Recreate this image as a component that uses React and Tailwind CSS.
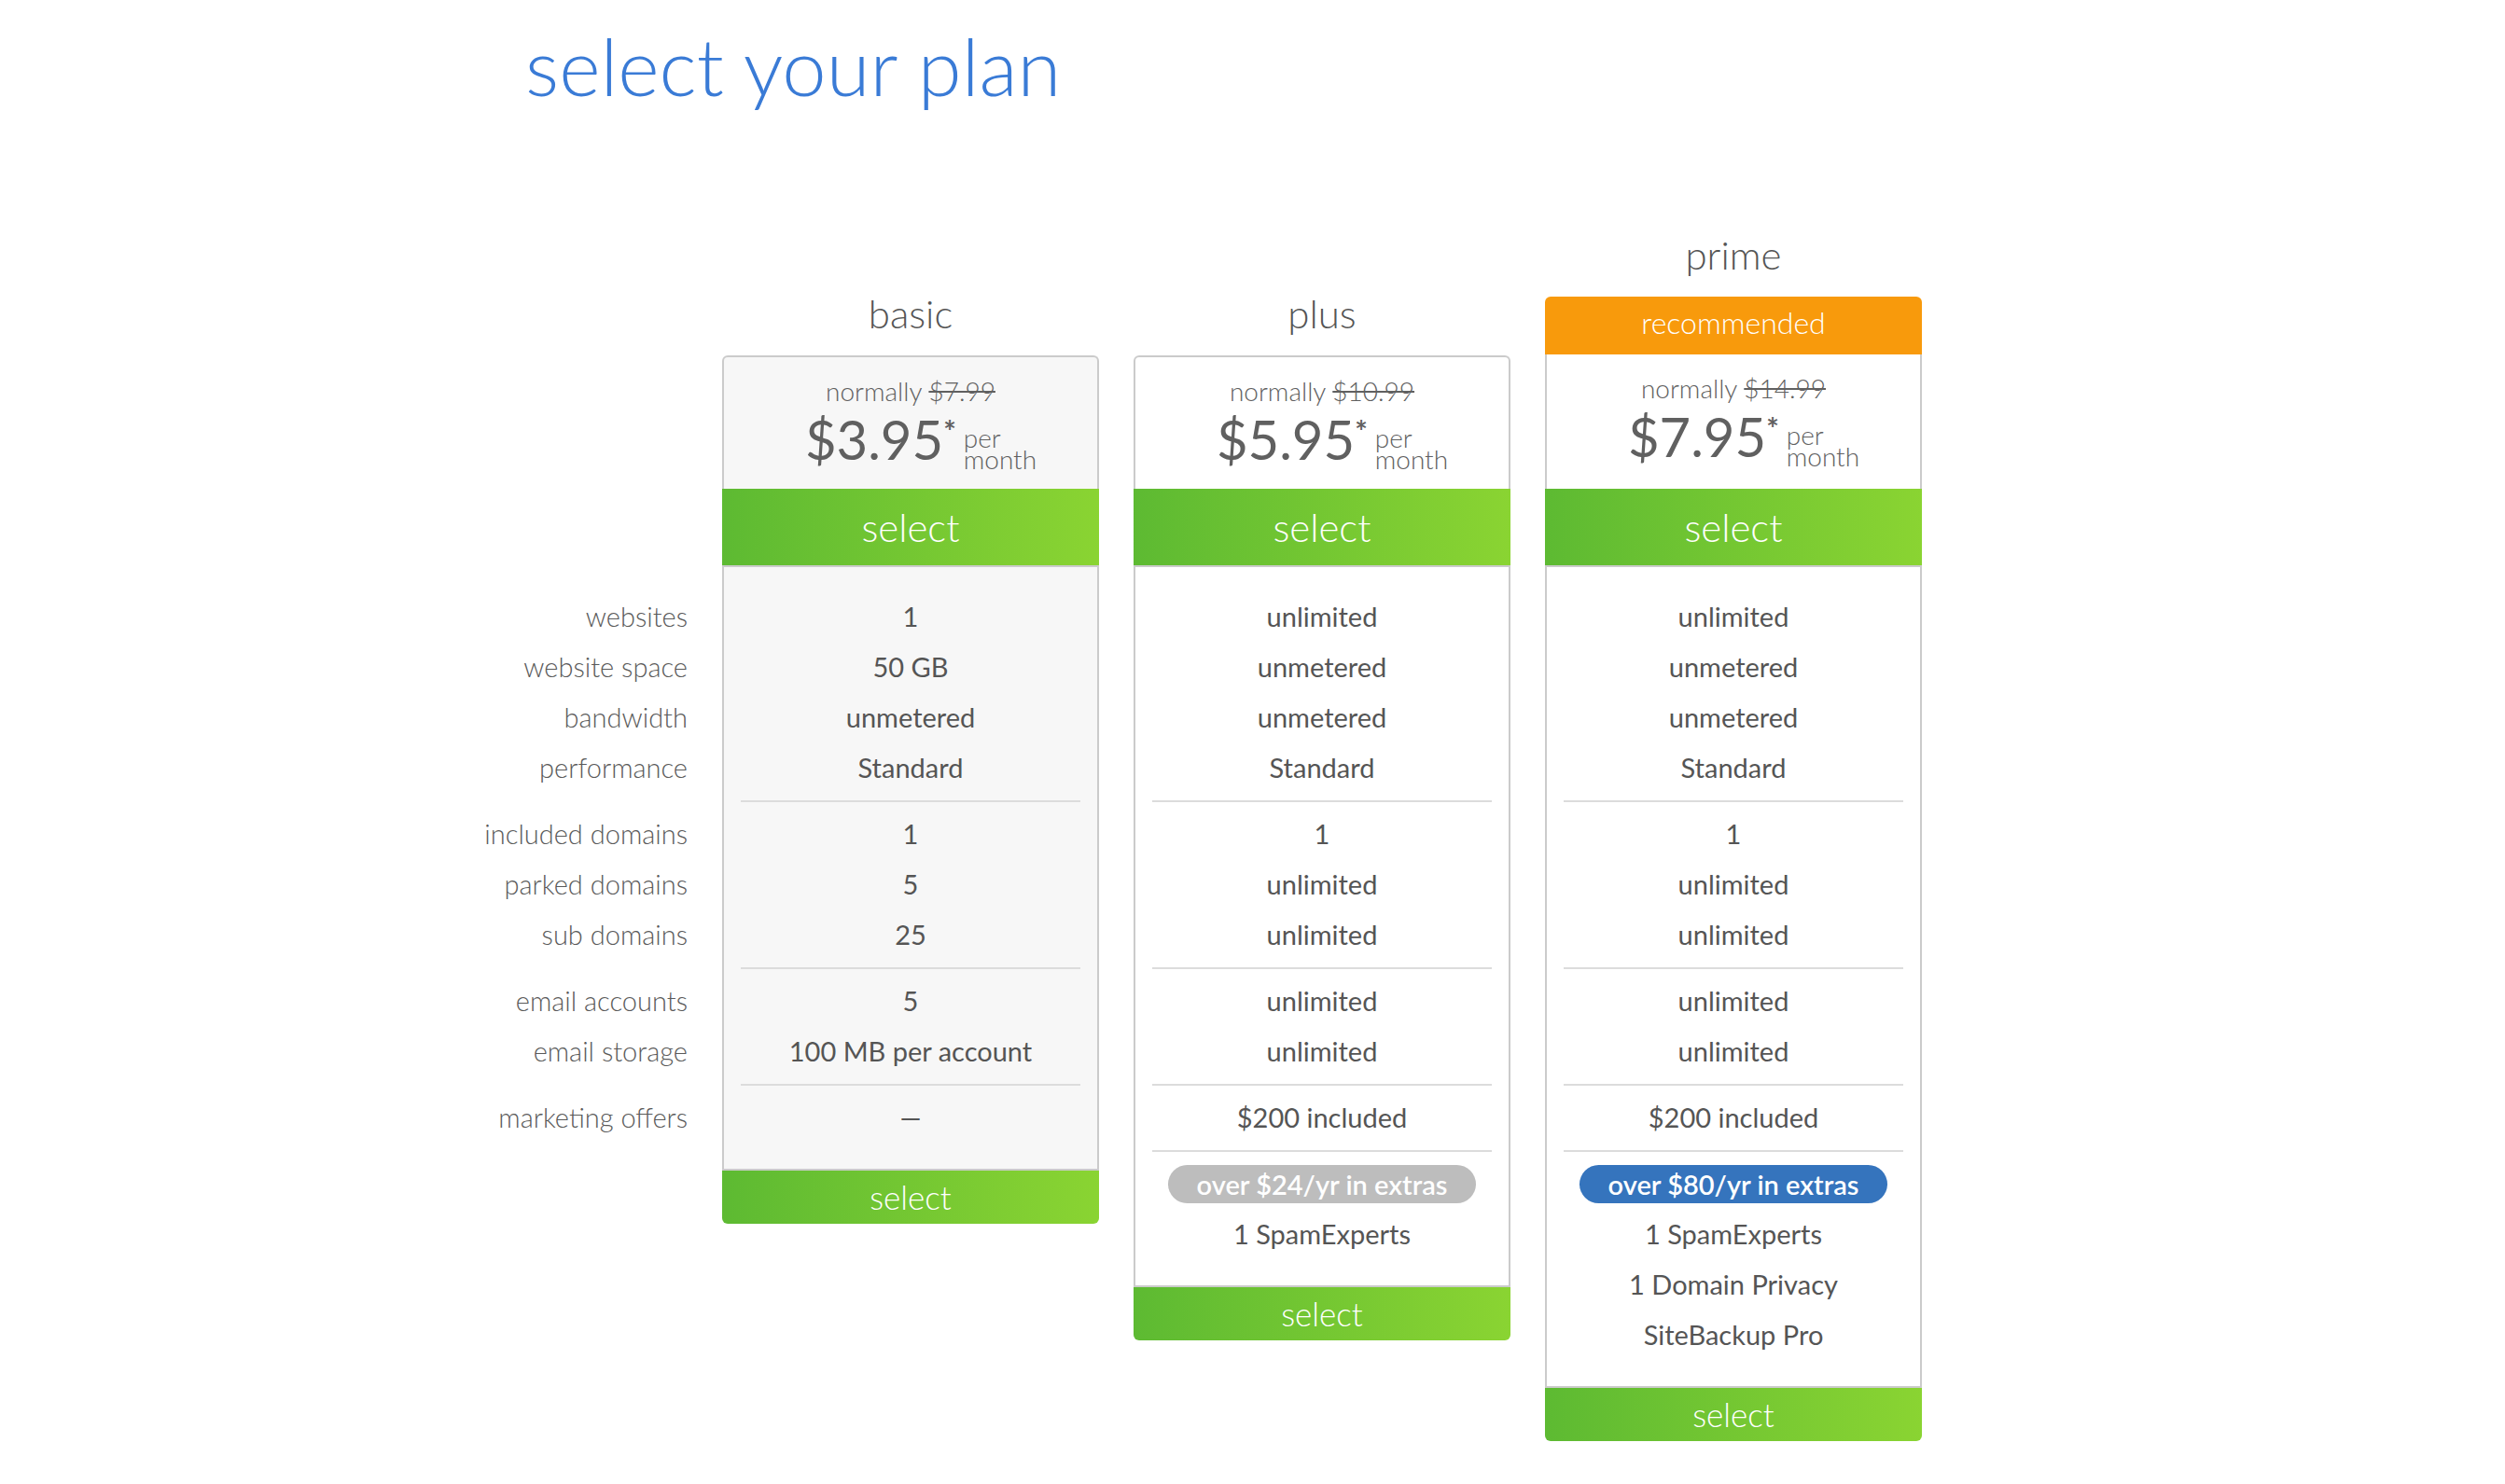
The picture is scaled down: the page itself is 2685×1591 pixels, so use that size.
import React from "react";

// feature labels, grouped the same way the plan rows are grouped
const labelGroups = [
  ["websites", "website space", "bandwidth", "performance"],
  ["included domains", "parked domains", "sub domains"],
  ["email accounts", "email storage"],
  ["marketing offers"],
];

const plans = [
  {
    name: "basic",
    normally: "$7.99",
    price: "$3.95",
    shaded: true,
    groups: [
      ["1", "50 GB", "unmetered", "Standard"],
      ["1", "5", "25"],
      ["5", "100 MB per account"],
      ["—"],
    ],
  },
  {
    name: "plus",
    normally: "$10.99",
    price: "$5.95",
    groups: [
      ["unlimited", "unmetered", "unmetered", "Standard"],
      ["1", "unlimited", "unlimited"],
      ["unlimited", "unlimited"],
      ["$200 included"],
    ],
    extras: { label: "over $24/yr in extras", tone: "bg-[#bdbdbd]", items: ["1 SpamExperts"] },
  },
  {
    name: "prime",
    normally: "$14.99",
    price: "$7.95",
    recommended: true,
    groups: [
      ["unlimited", "unmetered", "unmetered", "Standard"],
      ["1", "unlimited", "unlimited"],
      ["unlimited", "unlimited"],
      ["$200 included"],
    ],
    extras: {
      label: "over $80/yr in extras",
      tone: "bg-[#3574bd]",
      items: ["1 SpamExperts", "1 Domain Privacy", "SiteBackup Pro"],
    },
  },
];

function Divider({ hidden }) {
  return <div className={`mx-[18px] mt-[8px] mb-[7px] h-[2px] ${hidden ? "" : "bg-[#dcdcdc]"}`} />;
}

function SelectBar({ big, bottom }) {
  return (
    <button
      className={`w-full text-center font-light text-white bg-linear-to-r from-[#5dba32] to-[#8ad432] ${
        big ? "h-[82px] text-[42px] leading-[82px]" : "h-[57px] text-[35px] leading-[57px]"
      } ${bottom ? "rounded-b-[6px]" : ""}`}
    >
      select
    </button>
  );
}

function PlanCard({ plan }) {
  const bg = plan.shaded ? "bg-[#f7f7f7]" : "bg-white";
  return (
    <div className={`w-[404px] flex flex-col ${plan.recommended ? "" : "mt-[63px]"}`}>
      <div className="h-[60px] mb-[15px] text-center text-[42px] leading-[60px] font-light text-[#555]">
        {plan.name}
      </div>

      {plan.recommended && (
        <div className="h-[62px] rounded-t-[6px] bg-[#f89a0c] pt-[12px] text-center text-[32px] leading-none font-light text-white">
          recommended
        </div>
      )}

      {/* price header */}
      <div
        className={`${bg} border-[#cbcbcb] pt-[19px] text-[#606060] ${
          plan.recommended ? "h-[144px] border-x-2" : "h-[143px] border-x-2 border-t-2 rounded-t-[6px]"
        }`}
      >
        <div className="text-center text-[28px] leading-[34px] font-light">
          normally <span className="line-through">{plan.normally}</span>
        </div>
        <div className="mt-[6px] flex items-end justify-center pl-[22px]">
          <span className="text-[58px] leading-[58px]">{plan.price}</span>
          <span className="self-start mt-[5px] text-[32px] leading-none font-bold">*</span>
          <span className="ml-[8px] mb-[-4px] block text-left text-[28px] leading-[23px] font-light">
            per
            <br />
            month
          </span>
        </div>
      </div>

      <SelectBar big />

      {/* feature rows */}
      <div className={`${bg} border-2 border-[#cbcbcb] pt-[26px] pb-[28px] text-center text-[29px] leading-[54px] text-[#555]`}>
        {plan.groups.map((group, gi) => (
          <div key={gi}>
            {gi > 0 && <Divider />}
            {group.map((v, i) => (
              <div key={i} className="h-[54px]">
                {v}
              </div>
            ))}
          </div>
        ))}
        {plan.extras && (
          <>
            <Divider />
            <div className="h-[54px] flex items-center justify-center">
              <span
                className={`${plan.extras.tone} h-[41px] w-[330px] rounded-full text-[29px] leading-[41px] font-semibold text-white`}
              >
                {plan.extras.label}
              </span>
            </div>
            {plan.extras.items.map((v) => (
              <div key={v} className="h-[54px]">
                {v}
              </div>
            ))}
          </>
        )}
      </div>

      <SelectBar bottom />
    </div>
  );
}

export default function App() {
  return (
    <div className="min-h-screen bg-white font-['Lato','Open_Sans',sans-serif]">
      <h1 className="pt-[28px] pl-[563px] text-[85px] leading-none font-light text-[#3a7bd6]">select your plan</h1>

      <div className="mt-[130px] ml-[477px] flex items-start gap-[37px]">
        {/* labels column */}
        <div className="w-[260px] pt-[391px] text-right text-[29px] leading-[54px] font-light text-[#5a5a5a]">
          {labelGroups.map((group, gi) => (
            <div key={gi}>
              {gi > 0 && <Divider hidden />}
              {group.map((l) => (
                <div key={l} className="h-[54px]">
                  {l}
                </div>
              ))}
            </div>
          ))}
        </div>

        {plans.map((p) => (
          <PlanCard key={p.name} plan={p} />
        ))}
      </div>
    </div>
  );
}
